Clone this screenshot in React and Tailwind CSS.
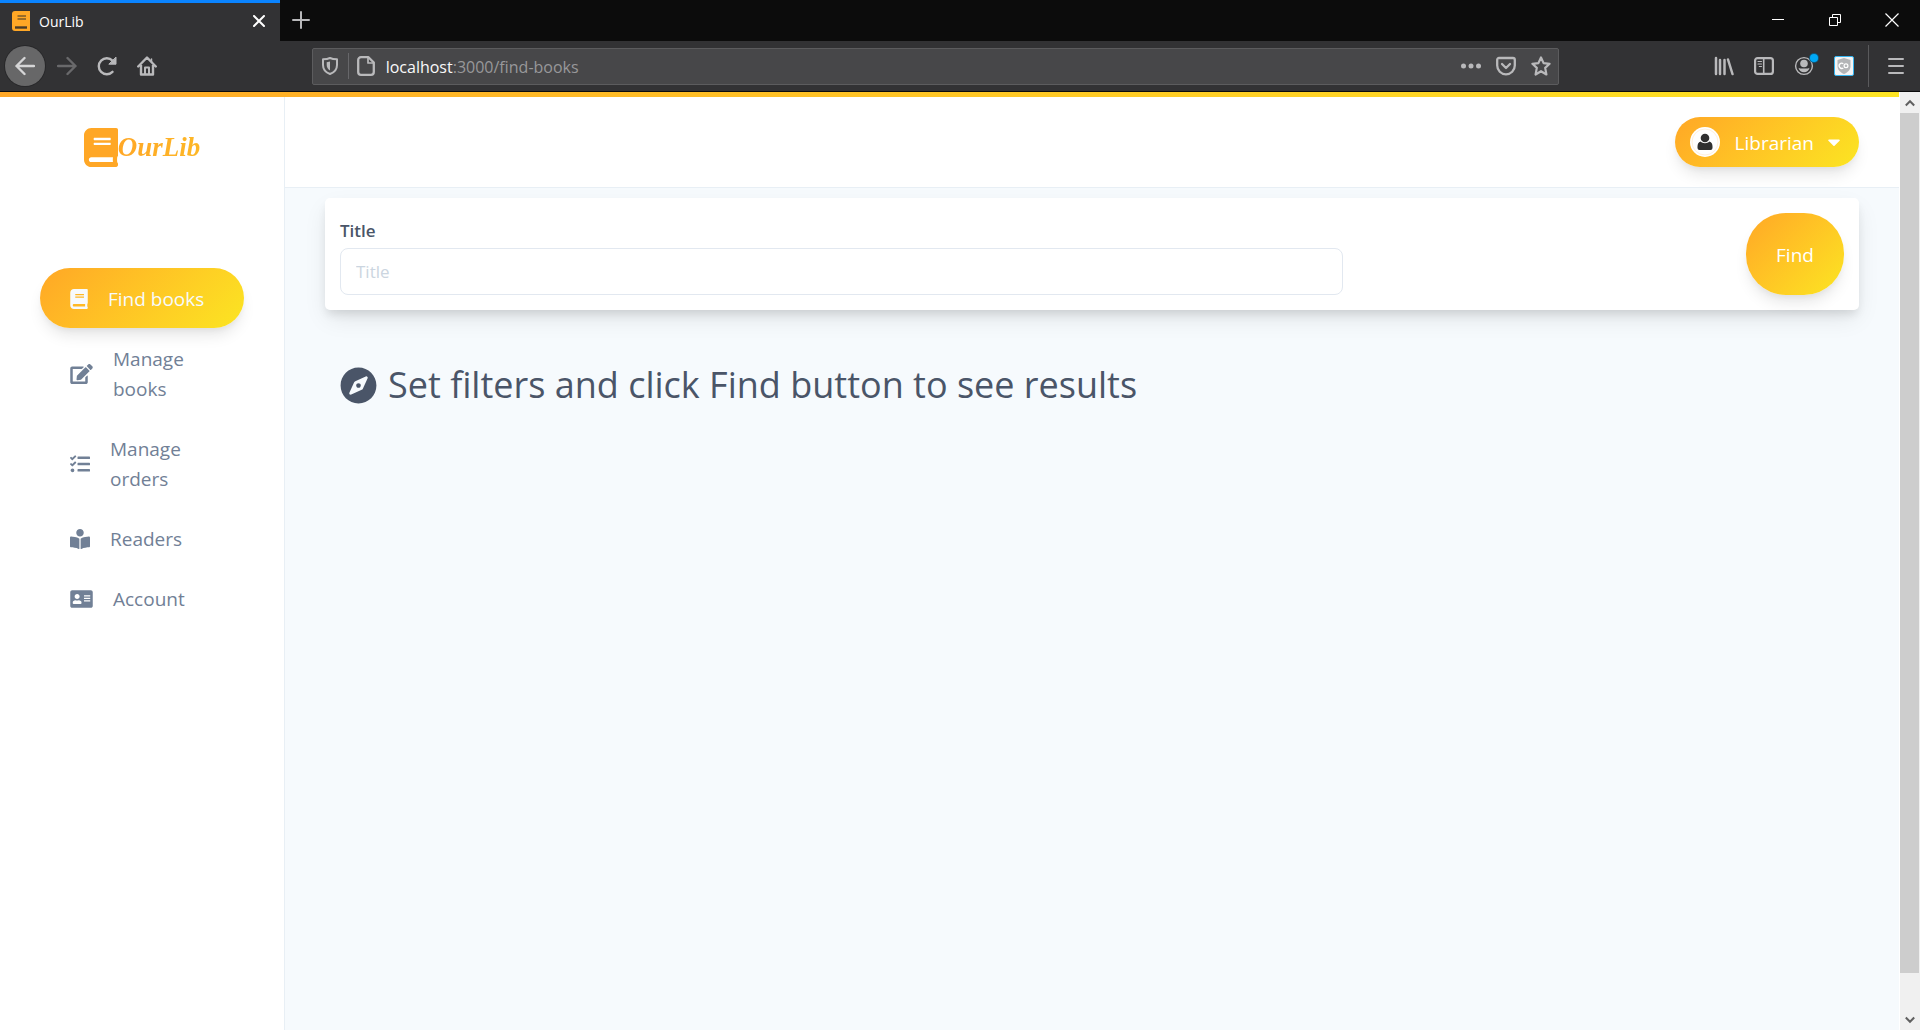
import React from "react";
import {
  FaAddressCard,
  FaBook,
  FaBookReader,
  FaCaretDown,
  FaCompass,
  FaEdit,
  FaTasks,
} from "react-icons/fa";

const stroke = {
  fill: "none",
  stroke: "currentColor",
  strokeWidth: 2,
  strokeLinecap: "round",
  strokeLinejoin: "round",
  "aria-hidden": true,
};

function WindowButton({ label, children }) {
  return (
    <button type="button" aria-label={label} className="flex h-10 w-[57px] items-center justify-center text-white">
      {children}
    </button>
  );
}

function TabBar() {
  return (
    <div className="flex h-[41px] bg-[#0c0c0c]">
      <div className="flex w-[280px] items-center border-t-[3px] border-[#0a84ff] bg-[#323234] px-3 pb-0.5 text-white">
        <svg viewBox="0 0 18 20" className="h-5 w-[18px]" aria-hidden="true">
          <path d="M3 0h15v20H3a3 3 0 0 1-3-3V3a3 3 0 0 1 3-3z" fill="#ffa726" />
          <path d="M5.500 5h8.500M5.500 8h8.500" stroke="#7a5a2a" strokeWidth="1.600" />
          <path d="M3 16.500h12" stroke="#4a3b28" strokeWidth="2.400" />
        </svg>
        <span className="ml-[9px] text-[14px]">OurLib</span>
        <button type="button" aria-label="Close tab" className="ml-auto flex h-5 w-[18px] items-center justify-center">
          <svg viewBox="0 0 12 12" className="size-3" {...stroke}>
            <path d="M1 1l10 10M11 1L1 11" />
          </svg>
        </button>
      </div>
      <button type="button" aria-label="New tab" className="flex h-10 w-[42px] items-center justify-center text-[#b9b9bb]">
        <svg viewBox="0 0 18 18" className="size-[18px]" {...stroke}>
          <path d="M9 1v16M1 9h16" />
        </svg>
      </button>
      <div className="ml-auto flex">
        <WindowButton label="Minimize">
          <svg viewBox="0 0 12 12" className="size-3" aria-hidden="true">
            <path d="M0 5.500h12" stroke="currentColor" />
          </svg>
        </WindowButton>
        <WindowButton label="Restore">
          <svg viewBox="0 0 12 12" className="size-3" fill="none" stroke="currentColor" aria-hidden="true">
            <path d="M.5 3.500h8v8h-8zM3.500 3.500v-3h8v8h-3" />
          </svg>
        </WindowButton>
        <WindowButton label="Close">
          <svg viewBox="0 0 14 14" className="size-[14px]" fill="none" stroke="currentColor" strokeWidth="1.200" aria-hidden="true">
            <path d="M.5 .5l13 13M13.500 .5l-13 13" />
          </svg>
        </WindowButton>
      </div>
    </div>
  );
}

function ToolButton({ label, children }) {
  return (
    <button type="button" aria-label={label} className="relative flex size-10 shrink-0 items-center justify-center">
      {children}
    </button>
  );
}

function Toolbar() {
  return (
    <div className="flex h-[51px] items-center border-b border-[#0c0c0d] bg-[#323234] text-[#b9b9bb]">
      <button
        type="button"
        aria-label="Back"
        className="mr-0.5 ml-[5px] flex size-10 shrink-0 items-center justify-center rounded-full bg-[#676768] text-[#d5d5d6] ring-1 ring-[#28282a]"
      >
        <svg viewBox="0 0 20 20" className="size-5" {...stroke} strokeWidth="2.400">
          <path d="M19 10H1.500M9.500 2l-8 8 8 8" />
        </svg>
      </button>
      <button type="button" aria-label="Forward" disabled className="flex size-10 shrink-0 items-center justify-center text-[#69696b]">
        <svg viewBox="0 0 20 20" className="size-5" {...stroke} strokeWidth="2.400">
          <path d="M1 10h17.500M10.500 2l8 8-8 8" />
        </svg>
      </button>
      <ToolButton label="Reload">
        <svg viewBox="0 0 20 20" className="size-5" {...stroke} strokeWidth="2.400">
          <path d="M15.500 15.800A8 8 0 1 1 15.500 4.600" />
          <path d="M19 1.500v6.700h-6.800z" fill="currentColor" strokeWidth="1" />
        </svg>
      </ToolButton>
      <ToolButton label="Home">
        <svg viewBox="0 0 20 20" className="size-5" {...stroke} strokeWidth="2.400">
          <path d="M1.200 10.500L10 1.500l8.800 9M4 9v9.500h12V9" />
          <path d="M8 18v-6.500h4V18" strokeWidth="2" />
          <path d="M14.500 3v3" strokeWidth="1.500" />
        </svg>
      </ToolButton>
      <div className="flex-[2]" />
      <div className="flex h-[37px] min-w-0 flex-[17] items-center rounded-xs border border-[#5c5c5e] bg-[#474749] pr-[7px] pl-[9px]">
        <svg viewBox="0 0 16 18" className="h-[18px] w-4 shrink-0" {...stroke}>
          <path d="M8 1C6 2 3.500 2.300 1 2.300V8c0 4.500 3 7.500 7 9 4-1.500 7-4.500 7-9V2.300C12.500 2.300 10 2 8 1z" />
          <path d="M8 4.500v9C6 12.300 4.700 10.500 4.700 8V5.300z" fill="currentColor" stroke="none" />
        </svg>
        <div className="mx-2 ml-[10px] h-[26px] w-px shrink-0 bg-[#67676a]" />
        <svg viewBox="0 0 18 20" className="h-5 w-[18px] shrink-0" {...stroke} strokeWidth="2.300">
          <path d="M4 1.200h7.500l5.300 5.300V16a2.800 2.800 0 0 1-2.800 2.800H4A2.800 2.800 0 0 1 1.200 16V4A2.800 2.800 0 0 1 4 1.200z" />
          <path d="M11 2v5h5" strokeWidth="1.700" />
        </svg>
        <div className="ml-[11px] min-w-0 flex-1 truncate pt-0.5 text-[16px] text-[#98989a]">
          <span className="text-[#f9f9fa]">localhost</span>:3000/find-books
        </div>
        <div className="flex shrink-0 items-center gap-[15px]">
          <button type="button" aria-label="Page actions">
            <svg viewBox="0 0 20 20" className="size-5" fill="currentColor" aria-hidden="true">
              <circle cx="2.500" cy="10" r="2.500" />
              <circle cx="10" cy="10" r="2.500" />
              <circle cx="17.500" cy="10" r="2.500" />
            </svg>
          </button>
          <button type="button" aria-label="Save to Pocket">
            <svg viewBox="0 0 20 20" className="size-5" {...stroke} strokeWidth="2.300">
              <path d="M3 2h14a1.800 1.800 0 0 1 1.800 1.800V9.500a8.800 8.800 0 0 1-17.600 0V3.800A1.800 1.800 0 0 1 3 2z" />
              <path d="M6 8l4 4 4-4" />
            </svg>
          </button>
          <button type="button" aria-label="Bookmark this page">
            <svg viewBox="0 0 20 20" className="size-5" {...stroke} strokeWidth="2.200">
              <path d="M10 1.500l2.600 5.600 6 .7-4.400 4.100 1.200 6.600-5.400-3.300-5.400 3.300 1.200-6.600L1.400 7.800l6-.7z" />
            </svg>
          </button>
        </div>
      </div>
      <div className="flex-[2]" />
      <div className="flex items-center pr-1">
        <ToolButton label="Library">
          <svg viewBox="0 0 20 20" className="size-5" {...stroke} strokeWidth="2.500">
            <path d="M2 2v16M6 4v14M10.500 4v14M14 3.500l4.500 14.500" />
          </svg>
        </ToolButton>
        <ToolButton label="Sidebars">
          <svg viewBox="0 0 20 20" className="size-5" {...stroke}>
            <rect x="1.100" y="2.100" width="17.800" height="15.800" rx="2.500" strokeWidth="2.200" />
            <path d="M9.700 2v16" strokeWidth="1.600" />
            <path d="M4 5.500h3.500M4 8h3.500M5.300 10.500h2.200" strokeWidth="1.200" />
          </svg>
        </ToolButton>
        <ToolButton label="Account">
          <svg viewBox="0 0 20 20" className="size-5" {...stroke}>
            <circle cx="10" cy="10" r="8.400" strokeWidth="1.400" />
            <circle cx="10" cy="7.500" r="3.800" fill="currentColor" stroke="none" />
            <path d="M4.500 11.800c1 1 2.500 .6 3.300 .6h4.400c.8 0 2.300 .4 3.300-.6-.4 2.600-2.700 4.500-5.500 4.500s-5.100-1.900-5.500-4.500z" fill="currentColor" stroke="none" />
          </svg>
          <span className="absolute top-2 right-1.5 size-2 rounded-full bg-[#00a8f5] ring-1 ring-[#10587c]" />
        </ToolButton>
        <ToolButton label="Extension">
          <svg viewBox="0 0 20 20" className="size-5" aria-hidden="true">
            <rect x=".5" y=".5" width="19" height="19" rx="1.500" fill="#f4f4f4" stroke="#36b5f0" />
            <path d="M10 2l6.500 2v6c0 4-3 6.500-6.500 8-3.500-1.500-6.500-4-6.500-8V4z" fill="#b3b5b7" />
            <path d="M9.300 7.700a2.600 2.600 0 1 0 0 4.200" fill="none" stroke="#fff" strokeWidth="1.300" />
            <circle cx="12" cy="9.800" r="1.900" fill="none" stroke="#fff" strokeWidth="1.200" />
          </svg>
        </ToolButton>
        <div className="mr-[7px] ml-1 h-[42px] w-px bg-[#5a5a5c]" />
        <ToolButton label="Open menu">
          <svg viewBox="0 0 16 16" className="size-4" {...stroke}>
            <path d="M1 1h14M1 8h14M1 15h14" />
          </svg>
        </ToolButton>
      </div>
    </div>
  );
}

const links = [
  { label: "Find books", Icon: FaBook, size: "h-5 w-[18px]", active: true },
  { label: "Manage books", Icon: FaEdit, size: "h-5 w-[23px]" },
  { label: "Manage orders", Icon: FaTasks, size: "h-5 w-5" },
  { label: "Readers", Icon: FaBookReader, size: "h-5 w-5" },
  { label: "Account", Icon: FaAddressCard, size: "h-5 w-[23px]" },
];

function Sidebar() {
  return (
    <aside className="w-[285px] shrink-0 border-r border-[#e8eff5] bg-white px-10">
      <a
        href="#home"
        className="mt-[29px] flex h-[42px] items-center justify-center font-['Liberation_Serif',serif] text-[27px] font-bold text-[#ffa726] italic"
      >
        <FaBook className="h-[39px] w-[34px]" />
        <span className="bg-linear-to-r from-[#ffa726] to-[#fdb726] bg-clip-text text-transparent">OurLib</span>
      </a>
      <nav className="mt-[100px]">
        {links.map(({ label, Icon, size, active }) => (
          <a
            key={label}
            href={"#" + label.toLowerCase().replace(" ", "-")}
            className={
              "flex items-center gap-5 rounded-[30px] px-[30px] pt-4 pb-3.5 text-[19px] leading-[30px] " +
              (active
                ? "bg-linear-135 from-[#ffa726] to-[#fbe522] text-[#f7fafc] shadow-[0_10px_15px_-3px_rgba(0,0,0,0.1),0_4px_6px_-2px_rgba(0,0,0,0.05)]"
                : "text-[#718096]")
            }
          >
            <Icon className={"shrink-0 " + size} />
            <span>{label}</span>
          </a>
        ))}
      </nav>
    </aside>
  );
}

function Header() {
  return (
    <header className="flex h-[91px] items-center justify-end border-b border-[#e8eff5] bg-white px-10">
      <button
        type="button"
        className="flex h-[50px] items-center rounded-full bg-linear-135 from-[#ffa726] to-[#fbe522] px-[15px] text-[19px] text-white shadow-[0_10px_15px_-3px_rgba(0,0,0,0.1),0_4px_6px_-2px_rgba(0,0,0,0.05)]"
      >
        <svg viewBox="0 0 30 30" className="size-[30px]" aria-hidden="true">
          <circle cx="15" cy="15" r="15" fill="#fff" />
          <circle cx="15" cy="15" r="13" fill="none" stroke="#fff0dc" />
          <circle cx="15" cy="11" r="4.300" fill="#303030" />
          <path d="M10.500 14.500c2.500 2.300 6.500 2.300 9 0 2 .8 3 2.500 3 5v1.500a2 2 0 0 1-2 2h-11a2 2 0 0 1-2-2v-1.500c0-2.500 1-4.200 3-5z" fill="#303030" />
        </svg>
        <span className="ml-[15px] pt-0.5">Librarian</span>
        <FaCaretDown className="ml-2.5 size-5" />
      </button>
    </header>
  );
}

function Content() {
  return (
    <main className="flex-1 bg-[#f6fafd] px-10 pt-[10px]">
      <form
        onSubmit={(e) => e.preventDefault()}
        className="flex justify-between rounded-[5px] bg-white p-[15px] shadow-[0_10px_25px_-3px_rgba(0,0,0,0.1),0_6px_10px_-2px_rgba(0,0,0,0.1)]"
      >
        <div className="w-2/3">
          <label htmlFor="title" className="block h-[35px] text-[17px] leading-[35px] font-semibold text-[#4a5568]">
            Title
          </label>
          <input
            id="title"
            placeholder="Title"
            className="block h-[47px] w-full rounded-lg border border-[#e2e8f0] bg-white px-[15px] text-[17px] text-[#4a5568] outline-none placeholder:text-[#cbd5e0]"
          />
        </div>
        <button
          type="submit"
          className="w-[98px] rounded-[40px] bg-linear-135 from-[#ffa726] to-[#fbe522] pt-0.5 text-[19px] text-white shadow-[0_10px_15px_-3px_rgba(0,0,0,0.1),0_4px_6px_-2px_rgba(0,0,0,0.05)]"
        >
          Find
        </button>
      </form>
      <h1 className="mt-[45px] flex items-center gap-[11px] px-[15px] text-[36px] leading-[60px] text-[#4a5568]">
        <FaCompass className="size-[37px] shrink-0" />
        Set filters and click Find button to see results
      </h1>
    </main>
  );
}

function Scrollbar() {
  return (
    <div className="flex w-[21px] shrink-0 flex-col border-l border-white bg-[#f0f0f0] text-[#606060]">
      <button type="button" aria-label="Scroll up" className="flex h-[21px] items-center justify-center">
        <svg viewBox="0 0 10 8" className="h-2 w-[10px]" fill="none" stroke="currentColor" strokeWidth="2" aria-hidden="true">
          <path d="M.8 6.500L5 2.200l4.200 4.300" />
        </svg>
      </button>
      <div className="min-h-0 flex-1 pr-px">
        <div className="h-[96%] bg-[#cdcdcd]" />
      </div>
      <button type="button" aria-label="Scroll down" className="flex h-[21px] items-center justify-center">
        <svg viewBox="0 0 10 8" className="h-2 w-[10px]" fill="none" stroke="currentColor" strokeWidth="2" aria-hidden="true">
          <path d="M.8 1.500L5 5.800l4.200-4.300" />
        </svg>
      </button>
    </div>
  );
}

export default function App() {
  return (
    <div className="flex h-screen flex-col font-['Open_Sans','Noto_Sans',sans-serif]">
      <TabBar />
      <Toolbar />
      <div className="flex min-h-0 flex-1">
        <div className="flex min-w-0 flex-1 flex-col">
          <div className="h-[5px] shrink-0 bg-linear-to-r from-[#ffa726] to-[#fee524]" />
          <div className="flex min-h-0 flex-1">
            <Sidebar />
            <div className="flex min-w-0 flex-1 flex-col">
              <Header />
              <Content />
            </div>
          </div>
        </div>
        <Scrollbar />
      </div>
    </div>
  );
}
